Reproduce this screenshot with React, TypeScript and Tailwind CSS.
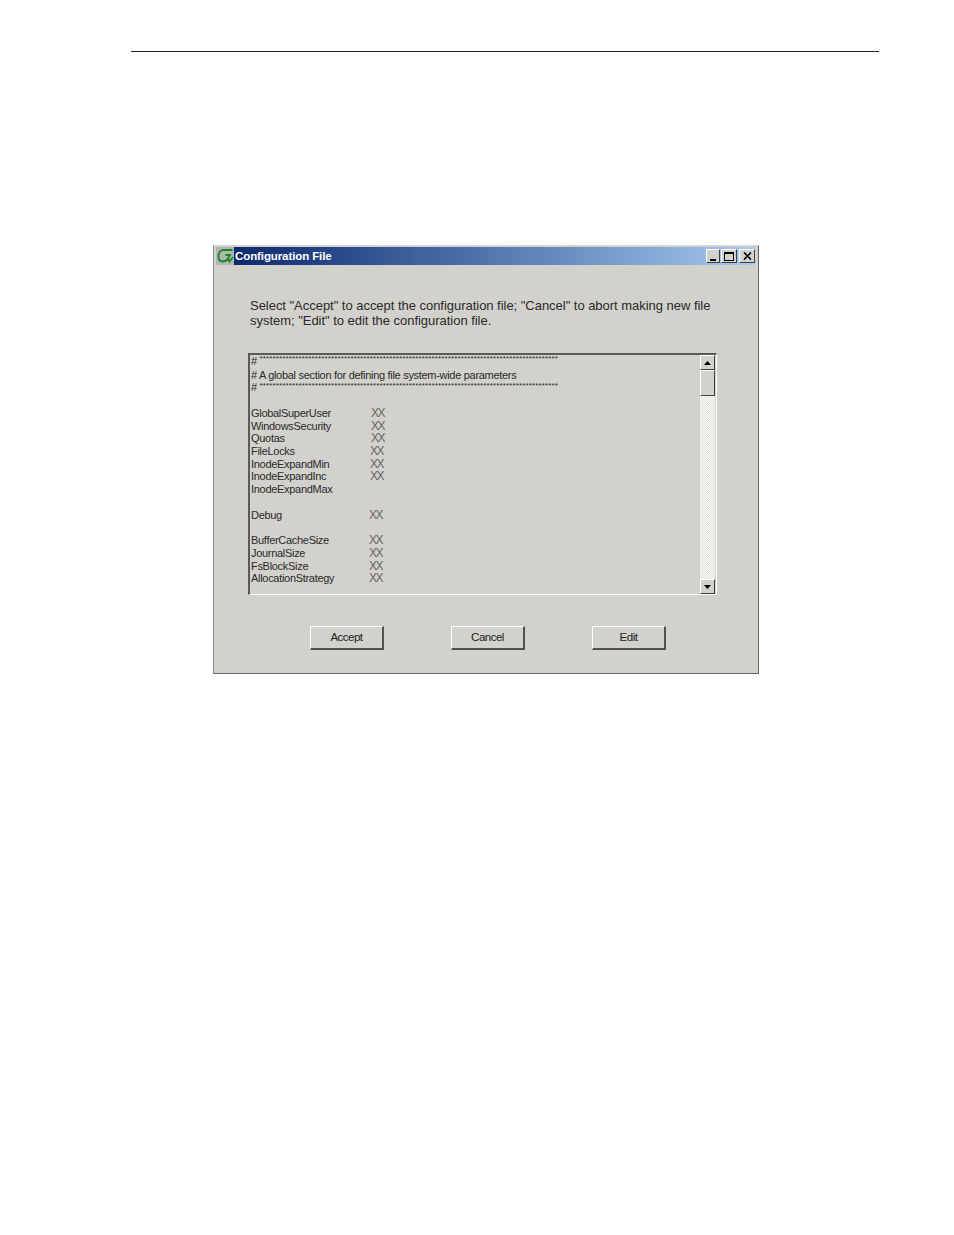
import React from 'react';

const rows = [
  { label: 'GlobalSuperUser', value: 'XX', indent: 'ml-[120px]' },
  { label: 'WindowsSecurity', value: 'XX', indent: 'ml-[120px]' },
  { label: 'Quotas', value: 'XX', indent: 'ml-[120px]' },
  { label: 'FileLocks', value: 'XX', indent: 'ml-[119px]' },
  { label: 'InodeExpandMin', value: 'XX', indent: 'ml-[119px]' },
  { label: 'InodeExpandInc', value: 'XX', indent: 'ml-[119px]' },
  { label: 'InodeExpandMax', value: '', indent: 'ml-[119px]' },
  { label: '', value: '', indent: 'ml-[119px]' },
  { label: 'Debug', value: 'XX', indent: 'ml-[118px]' },
  { label: '', value: '', indent: 'ml-[118px]' },
  { label: 'BufferCacheSize', value: 'XX', indent: 'ml-[118px]' },
  { label: 'JournalSize', value: 'XX', indent: 'ml-[118px]' },
  { label: 'FsBlockSize', value: 'XX', indent: 'ml-[118px]' },
  { label: 'AllocationStrategy', value: 'XX', indent: 'ml-[118px]' },
];

const stars = '*'.repeat(92);

const raised = 'bg-[#d2d1cb] border-t border-l border-t-white border-l-white border-r border-b border-r-[#404040] border-b-[#404040]';

const ScrollArrow = ({ up }: { up?: boolean }) => (
  <div className={`w-[15px] h-[15px] flex items-center justify-center ${raised}`}>
    <svg width="7" height="4" viewBox="0 0 7 4">
      <path d={up ? 'M3.5 0L7 4H0Z' : 'M0 0H7L3.5 4Z'} fill="#000" />
    </svg>
  </div>
);

const DialogButton = ({ label }: { label: string }) => (
  <button className="w-[74px] h-[24px] bg-[repeating-conic-gradient(#d5d4cf_0_25%,#cfcec8_0_50%)] bg-[length:2px_2px] border-t border-l border-t-white border-l-white border-r-2 border-b-2 border-r-[#505050] border-b-[#505050] text-[11.5px] tracking-[-0.5px] text-[#222] flex items-center justify-center">
    {label}
  </button>
);

export default function App() {
  return (
    <div className="w-[954px] h-[1235px] bg-white overflow-hidden font-['Liberation_Sans',Arial,sans-serif]">
      <div className="pt-[51px] pl-[131px]">
        <div className="w-[748px] h-px bg-[#222]"></div>
      </div>

      {/* Configuration dialog */}
      <div className="ml-[213px] mt-[193px] w-[546px] h-[429px] bg-[repeating-conic-gradient(#d5d4cf_0_25%,#cfcec8_0_50%)] bg-[length:2px_2px] border border-[#8a8a86] border-r-[#666] border-b-[#666] border-t-[#d8d8d8] flex flex-col">
        <div className="ml-[2px] mr-[3px] mt-px h-[18px] bg-gradient-to-r from-[#0a246a] to-[#a6caf0] flex items-center">
          <div className="w-[18px] h-[18px] bg-[#b4b4ae] flex items-center justify-center shrink-0">
            <svg width="18" height="16" viewBox="0 0 18 16" fill="none">
              <path d="M16.5 2H6.5C4 3 2.5 6 2.5 8.5C2.5 12 4.5 13.5 6.5 13.5C9 13.5 10.5 12.5 11.5 11.5L14 7H9.5M12 10.5L13.5 13.5L17 9" stroke="#0f8a1e" strokeWidth="1.8" />
            </svg>
          </div>
          <span className="ml-px mt-[2px] text-[11.5px] font-bold text-white tracking-[-0.1px] leading-none">Configuration File</span>
          <div className="ml-auto flex gap-[2px]">
            <div className="flex gap-px">
              <div className={`w-[14px] h-[14px] flex items-center justify-center ${raised}`}>
                <div className="w-[6px] h-[2px] bg-black mt-[7px]"></div>
              </div>
              <div className={`w-[16px] h-[14px] flex items-center justify-center ${raised}`}>
                <div className="w-[10px] h-[9px] border border-black border-t-2"></div>
              </div>
            </div>
            <div className={`w-[16px] h-[14px] flex items-center justify-center ${raised}`}>
              <svg width="9" height="8" viewBox="0 0 9 8">
                <path d="M1 0.5L8 7.5M8 0.5L1 7.5" stroke="#000" strokeWidth="1.6" />
              </svg>
            </div>
          </div>
        </div>

        <p className="ml-[36px] mt-[33px] w-[468px] h-[30px] text-[13px] leading-[15px] tracking-[-0.03px] text-[#2a2a2a]">
          Select "Accept" to accept the configuration file; "Cancel" to abort making new file system; "Edit" to edit the configuration file.
        </p>

        {/* Config file text box */}
        <div className="ml-[34px] mt-[25px] w-[469px] h-[242px] border-t-2 border-l-2 border-t-[#5a5a5a] border-l-[#5a5a5a] border-r border-b border-r-white border-b-white flex">
          <div className="flex-1 min-w-0 overflow-hidden pl-px text-[11px] leading-[12.77px] tracking-[-0.3px] text-[#2a2a2a]">
            <div className="h-[12.77px] whitespace-nowrap"># <span className="inline-block -translate-y-[2px] text-[8px] tracking-[0.13px] align-top">{stars}</span></div>
            <div className="h-[12.77px] mt-px whitespace-nowrap"># A global section for defining file system-wide parameters</div>
            <div className="h-[12.77px] mt-[-1px] whitespace-nowrap"># <span className="inline-block -translate-y-px text-[8px] tracking-[0.13px] align-top">{stars}</span></div>
            <div className="h-[13.6px]"></div>
            {rows.map((row, i) => (
              <div key={i} className="h-[12.72px] relative whitespace-nowrap">
                {row.label}
                {row.value && (
                  <span className={`absolute left-0 top-0 ${row.indent} text-[#666] text-[12px] tracking-[-1.5px]`}>{row.value}</span>
                )}
              </div>
            ))}
          </div>
          <div className="w-[15px] mr-px flex flex-col shrink-0 bg-[repeating-conic-gradient(#e4e4e0_0_25%,#f8f8f6_0_50%)] bg-[length:2px_2px]">
            <ScrollArrow up />
            <div className={`h-[26px] ${raised}`}></div>
            <div className="flex-1"></div>
            <ScrollArrow />
          </div>
        </div>

        <div className="ml-[96px] mt-[31px] flex gap-[67px]">
          <DialogButton label="Accept" />
          <DialogButton label="Cancel" />
          <DialogButton label="Edit" />
        </div>
      </div>
    </div>
  );
}
